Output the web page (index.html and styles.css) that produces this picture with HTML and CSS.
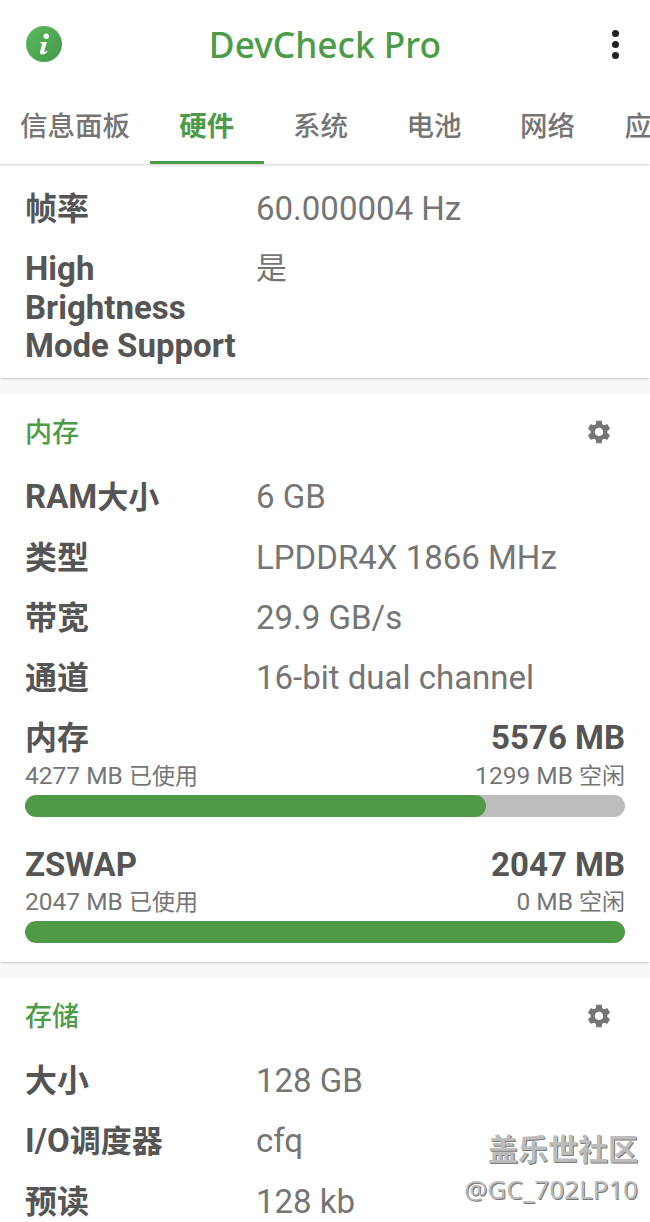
FILE: index.html
```html
<!DOCTYPE html>
<html lang="zh-CN">
<head>
    <meta charset="UTF-8">
    <meta name="viewport" content="width=device-width, initial-scale=1.0">
    <title>DevCheck Pro</title>
    <link rel="stylesheet" href="styles.css">
</head>
<body>
    <div class="screen">
        <!-- App bar -->
        <header class="app-bar">
            <svg class="info-icon" viewBox="0 0 36 36">
                <defs>
                    <linearGradient id="infoFill" x1="0" y1="0" x2="1" y2="1">
                        <stop offset="0" stop-color="#5cb85c"/>
                        <stop offset="1" stop-color="#43984a"/>
                    </linearGradient>
                </defs>
                <circle cx="18" cy="18" r="18" fill="url(#infoFill)"/>
                <circle cx="20.2" cy="10.2" r="2.7" fill="#fff"/>
                <path d="M14.2 16h6.6l-2.5 9.2c-.2.8.6 1 1.2.5l1.3-1.1.7.9c-1.6 1.9-3.1 2.9-5 2.9-2 0-2.9-1.1-2.4-3l1.9-6.8c.2-.8-.1-1.1-1-1.2z" fill="#fff"/>
            </svg>
            <div class="app-title">DevCheck Pro</div>
            <div class="more-icon"><span></span><span></span><span></span></div>
        </header>

        <!-- Tabs -->
        <nav class="tabs">
            <div class="tab">信息面板</div>
            <div class="tab active">硬件</div>
            <div class="tab">系统</div>
            <div class="tab">电池</div>
            <div class="tab">网络</div>
            <div class="tab">应用程序</div>
        </nav>

        <!-- Display card, continues from above -->
        <section class="card card-top">
            <div class="info-row">
                <div class="key cjk">帧率</div>
                <div class="value">60.000004 Hz</div>
            </div>
            <div class="info-row">
                <div class="key">High Brightness Mode Support</div>
                <div class="value cjk">是</div>
            </div>
        </section>

        <!-- Memory -->
        <section class="card card-memory">
            <div class="card-head">
                <h3>内存</h3>
                <svg class="gear-icon" viewBox="0 0 24 24"><path d="M19.14 12.94c.04-.3.06-.61.06-.94 0-.32-.02-.64-.07-.94l2.03-1.58c.18-.14.23-.41.12-.61l-1.92-3.32c-.12-.22-.37-.29-.59-.22l-2.39.96c-.5-.38-1.03-.7-1.62-.94l-.36-2.54c-.04-.24-.24-.41-.48-.41h-3.84c-.24 0-.43.17-.47.41l-.36 2.54c-.59.24-1.13.57-1.62.94l-2.39-.96c-.22-.08-.47 0-.59.22L2.74 8.87c-.12.21-.08.47.12.61l2.03 1.58c-.05.3-.09.63-.09.94s.02.64.07.94l-2.03 1.58c-.18.14-.23.41-.12.61l1.92 3.32c.12.22.37.29.59.22l2.39-.96c.5.38 1.03.7 1.62.94l.36 2.54c.05.24.24.41.48.41h3.84c.24 0 .44-.17.47-.41l.36-2.54c.59-.24 1.13-.56 1.62-.94l2.39.96c.22.08.47 0 .59-.22l1.92-3.32c.12-.22.07-.47-.12-.61l-2.01-1.58zM12 15.6c-1.98 0-3.6-1.62-3.6-3.6s1.62-3.6 3.6-3.6 3.6 1.62 3.6 3.6-1.62 3.6-3.6 3.6z"/></svg>
            </div>
            <div class="info-row">
                <div class="key">RAM<span class="cjk">大小</span></div>
                <div class="value">6 GB</div>
            </div>
            <div class="info-row">
                <div class="key cjk">类型</div>
                <div class="value">LPDDR4X 1866 MHz</div>
            </div>
            <div class="info-row">
                <div class="key cjk">带宽</div>
                <div class="value">29.9 GB/s</div>
            </div>
            <div class="info-row">
                <div class="key cjk">通道</div>
                <div class="value">16-bit dual channel</div>
            </div>

            <div class="meter">
                <div class="meter-line">
                    <div class="key cjk">内存</div>
                    <div class="key">5576 MB</div>
                </div>
                <div class="meter-line meter-sub">
                    <div>4277 MB <span class="cjk">已使用</span></div>
                    <div>1299 MB <span class="cjk">空闲</span></div>
                </div>
                <div class="bar"><div class="bar-fill" style="width: 76.8%"></div></div>
            </div>
            <div class="meter">
                <div class="meter-line">
                    <div class="key">ZSWAP</div>
                    <div class="key">2047 MB</div>
                </div>
                <div class="meter-line meter-sub">
                    <div>2047 MB <span class="cjk">已使用</span></div>
                    <div>0 MB <span class="cjk">空闲</span></div>
                </div>
                <div class="bar"><div class="bar-fill" style="width: 100%"></div></div>
            </div>
        </section>

        <!-- Storage -->
        <section class="card card-last">
            <div class="card-head">
                <h3>存储</h3>
                <svg class="gear-icon" viewBox="0 0 24 24"><path d="M19.14 12.94c.04-.3.06-.61.06-.94 0-.32-.02-.64-.07-.94l2.03-1.58c.18-.14.23-.41.12-.61l-1.92-3.32c-.12-.22-.37-.29-.59-.22l-2.39.96c-.5-.38-1.03-.7-1.62-.94l-.36-2.54c-.04-.24-.24-.41-.48-.41h-3.84c-.24 0-.43.17-.47.41l-.36 2.54c-.59.24-1.13.57-1.62.94l-2.39-.96c-.22-.08-.47 0-.59.22L2.74 8.87c-.12.21-.08.47.12.61l2.03 1.58c-.05.3-.09.63-.09.94s.02.64.07.94l-2.03 1.58c-.18.14-.23.41-.12.61l1.92 3.32c.12.22.37.29.59.22l2.39-.96c.5.38 1.03.7 1.62.94l.36 2.54c.05.24.24.41.48.41h3.84c.24 0 .44-.17.47-.41l.36-2.54c.59-.24 1.13-.56 1.62-.94l2.39.96c.22.08.47 0 .59-.22l1.92-3.32c.12-.22.07-.47-.12-.61l-2.01-1.58zM12 15.6c-1.98 0-3.6-1.62-3.6-3.6s1.62-3.6 3.6-3.6 3.6 1.62 3.6 3.6-1.62 3.6-3.6 3.6z"/></svg>
            </div>
            <div class="info-row">
                <div class="key cjk">大小</div>
                <div class="value">128 GB</div>
            </div>
            <div class="info-row">
                <div class="key">I/O<span class="cjk">调度器</span></div>
                <div class="value">cfq</div>
            </div>
            <div class="info-row">
                <div class="key cjk">预读</div>
                <div class="value">128 kb</div>
            </div>
        </section>

        <!-- Watermark on top of the screenshot -->
        <div class="watermark">
            <div class="watermark-name">盖乐世社区</div>
            <div class="watermark-user">@GC_702LP10</div>
        </div>
    </div>
</body>
</html>
```

FILE: styles.css
```css
/* General Styles */
* {
    box-sizing: border-box;
}

html, body {
    height: 100%;
    margin: 0;
    background-color: #f8f8f8;
    font-family: Roboto, "Noto Sans CJK SC", sans-serif;
}

.screen {
    position: relative;
    width: 650px;
    height: 1222px;
    overflow: hidden;
}

/* App bar */
.app-bar {
    position: relative;
    z-index: 2;
    display: grid;
    grid-template-columns: 1fr auto 1fr;
    align-items: center;
    height: 90px;
    padding: 0 26px 2px;
    background: #fff;
}

.info-icon {
    width: 36px;
    height: 36px;
}

.app-title {
    font-family: "Noto Sans", "Noto Sans CJK SC", sans-serif;
    font-size: 35.3px;
    font-weight: 500;
    line-height: 44px;
    color: #4c9b48;
}

.more-icon {
    display: flex;
    flex-direction: column;
    gap: 4px;
    width: 7px;
    margin-right: 5px;
    justify-self: end;
}

.more-icon span {
    width: 7px;
    height: 7px;
    border-radius: 50%;
    background: #222;
}

/* Tabs */
.tabs {
    position: relative;
    z-index: 1;
    display: flex;
    height: 74px;
    background: #fff;
    box-shadow: 0 1px 3px rgba(0, 0, 0, 0.2);
    overflow: hidden;
}

.tab {
    flex: 0 0 auto;
    min-width: 113.6px;
    padding: 0 20px;
    font-size: 27.5px;
    font-weight: 500;
    line-height: 74px;
    text-align: center;
    color: #757575;
}

.tab.active {
    color: #4c9b48;
    font-weight: 700;
    border-bottom: 3px solid #4c9b48;
}

/* Cards */
.card {
    padding: 19px 25px 0;
    background: #fff;
    margin-bottom: 16px;
    box-shadow: 0 2px 2px -1px rgba(0, 0, 0, 0.2);
}

.card-top {
    height: 214px;
    padding-top: 26px;
}

.card-memory {
    height: 568px;
}

.card-last {
    height: 300px;
}

.card-head {
    display: flex;
    align-items: center;
    justify-content: space-between;
    height: 38px;
    margin-bottom: 27px;
}

.card-head h3 {
    margin: 0;
    padding-bottom: 3px;
    font-size: 27px;
    font-weight: 500;
    color: #4c9b48;
}

.gear-icon {
    width: 28px;
    height: 28px;
    margin-right: 12px;
    fill: #757575;
}

/* Key / value rows */
.info-row {
    display: grid;
    grid-template-columns: 216px 1fr;
    column-gap: 15px;
    margin-bottom: 21.5px;
    font-size: 33px;
    line-height: 38.5px;
}

.key {
    font-weight: 700;
    color: #555;
}

.value {
    color: #757575;
}

.cjk {
    font-size: 31px;
}

.key.cjk {
    font-size: 32px;
}

/* Memory meters */
.meter {
    margin-bottom: 29px;
}

.meter-line {
    display: flex;
    justify-content: space-between;
    font-size: 33px;
    line-height: 38.5px;
}

.meter-sub {
    margin-top: 4px;
    font-size: 24.5px;
    line-height: 28px;
    color: #757575;
}

.meter-sub .cjk {
    font-size: 23px;
}

.bar {
    height: 22px;
    margin-top: 4px;
    border-radius: 11px;
    background: #bdbdbd;
    overflow: hidden;
}

.bar-fill {
    height: 100%;
    border-radius: 11px;
    background: #4f9a46;
}

/* Watermark */
.watermark {
    position: absolute;
    right: 12px;
    top: 1130px;
    text-align: right;
    color: #bcbcbc;
    text-shadow: 1px 1px 0 #777;
}

.watermark-name {
    font-size: 30px;
    font-weight: 700;
    line-height: 40px;
}

.watermark-user {
    margin-top: 2px;
    font-family: "Noto Sans", sans-serif;
    font-size: 26px;
    line-height: 34px;
}
```
